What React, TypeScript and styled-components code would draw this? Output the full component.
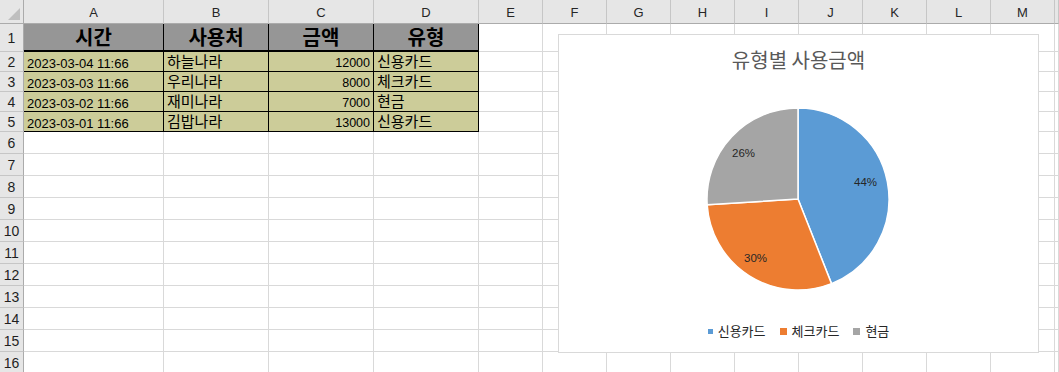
import React from 'react';
import styled, { createGlobalStyle } from 'styled-components';

const GlobalStyle = createGlobalStyle`
    html, body {
        margin: 0;
        padding: 0;
        background: #fff;
    }
    body {
        font-family: "Liberation Sans", "Noto Sans CJK KR", sans-serif;
    }
`;

const LATIN = '"Liberation Sans", "Noto Sans CJK KR", sans-serif';
const KOREAN = '"Noto Sans CJK KR", sans-serif';

// N is only a sliver at the right edge, its letter is out of view
const COLUMNS = ['A', 'B', 'C', 'D', 'E', 'F', 'G', 'H', 'I', 'J', 'K', 'L', 'M', ''];
const ROW_COUNT = 16;

const header = ['시간', '사용처', '금액', '유형'];
const records = [
    ['2023-03-04 11:66', '하늘나라', '12000', '신용카드'],
    ['2023-03-03 11:66', '우리나라', '8000', '체크카드'],
    ['2023-03-02 11:66', '재미나라', '7000', '현금'],
    ['2023-03-01 11:66', '김밥나라', '13000', '신용카드'],
];

const slices = [
    { name: '신용카드', value: 44, color: '#5B9BD5', label: { x: 159.5, y: 75 }, swatch: 5 },
    { name: '체크카드', value: 30, color: '#ED7D31', label: { x: 49.5, y: 151 }, swatch: 7 },
    { name: '현금', value: 26, color: '#A5A5A5', label: { x: 37.5, y: 46 }, swatch: 7 },
];

const Page = styled.div({
    position: 'relative',
    width: 1059,
    height: 372,
    overflow: 'hidden',
});

const Sheet = styled.div({
    display: 'grid',
    gridTemplateColumns: '24px 140px repeat(3, 105px) repeat(9, 64px) 4px',
    gridTemplateRows: '24px 28px repeat(4, 20px) repeat(11, 22px)',
});

const Corner = styled.div({
    position: 'relative',
    background: '#E6E6E6',
    borderRight: '1px solid #ABABAB',
    borderBottom: '1px solid #ABABAB',
    boxSizing: 'border-box',
    '&::after': {
        content: '""',
        position: 'absolute',
        right: 3,
        bottom: 3,
        width: 12,
        height: 12,
        background: '#BFBFBF',
        clipPath: 'polygon(100% 0, 100% 100%, 0 100%)',
    },
});

const ColHeader = styled.div({
    display: 'flex',
    alignItems: 'center',
    justifyContent: 'center',
    background: '#E6E6E6',
    borderRight: '1px solid #C6C6C6',
    borderBottom: '1px solid #ABABAB',
    boxSizing: 'border-box',
    fontFamily: LATIN,
    fontSize: 13,
    color: '#262626',
    paddingTop: 2,
});

const RowHeader = styled.div({
    display: 'flex',
    alignItems: 'center',
    justifyContent: 'center',
    background: '#E6E6E6',
    borderRight: '1px solid #ABABAB',
    borderBottom: '1px solid #C6C6C6',
    boxSizing: 'border-box',
    fontFamily: LATIN,
    fontSize: 14,
    color: '#1F1F1F',
    paddingTop: 1,
});

const Cell = styled.div({
    borderRight: '1px solid #D9D9D9',
    borderBottom: '1px solid #D9D9D9',
    boxSizing: 'border-box',
});

const HeadCell = styled.div({
    display: 'flex',
    alignItems: 'center',
    justifyContent: 'center',
    background: '#969696',
    borderRight: '1px solid #000',
    borderBottom: '2px solid #000',
    boxSizing: 'border-box',
    fontFamily: KOREAN,
    fontSize: 20,
    fontWeight: 700,
    lineHeight: '24px',
    color: '#000',
});

const DataCell = styled.div<{ $align?: 'left' | 'right'; $korean?: boolean }>(p => ({
    display: 'flex',
    alignItems: 'flex-end',
    justifyContent: p.$align === 'right' ? 'flex-end' : 'flex-start',
    background: '#CCCC99',
    borderRight: '1px solid #000',
    borderBottom: '1px solid #000',
    boxSizing: 'border-box',
    padding: p.$korean ? '0 3px 1px 3px' : '0 3px 0 3px',
    fontFamily: p.$korean ? KOREAN : LATIN,
    fontSize: p.$korean ? 15 : p.$align === 'right' ? 12.5 : 13,
    lineHeight: p.$korean ? '18px' : '15px',
    color: '#000',
    whiteSpace: 'nowrap',
}));

// chart floats over the cells like an excel chart object
const ChartFrame = styled.div({
    position: 'absolute',
    left: 558,
    top: 34,
    width: 481,
    height: 319,
    boxSizing: 'border-box',
    border: '1px solid #D9D9D9',
    background: '#fff',
    display: 'flex',
    flexDirection: 'column',
    alignItems: 'center',
});

const ChartTitle = styled.div({
    marginTop: 12,
    fontFamily: KOREAN,
    fontSize: 20,
    lineHeight: '26px',
    color: '#595959',
});

const Pie = styled.svg({
    display: 'block',
    marginTop: 34,
    marginLeft: -2,
});

const PieLabel = styled.text({
    fontFamily: LATIN,
    fontSize: 11.5,
    fill: '#262626',
});

const Legend = styled.div({
    display: 'flex',
    alignItems: 'center',
    gap: 14,
    marginTop: 31,
    fontFamily: KOREAN,
    fontSize: 13,
    lineHeight: '18px',
    color: '#262626',
});

const LegendItem = styled.div({
    display: 'flex',
    alignItems: 'center',
    gap: 5,
});

const Swatch = styled.span<{ $color: string; $size: number }>(p => ({
    display: 'block',
    width: p.$size,
    height: p.$size,
    background: p.$color,
}));

const point = (deg: number, r: number, c: number) => {
    const rad = (deg * Math.PI) / 180;
    return [c + r * Math.cos(rad), c + r * Math.sin(rad)];
};

const PieChart = () => {
    const c = 92;
    const r = 91;
    let angle = -90;
    return (
        <Pie width={184} height={184} viewBox="0 0 184 184">
            {slices.map(s => {
                const sweep = (s.value / 100) * 360;
                const [x1, y1] = point(angle, r, c);
                const [x2, y2] = point(angle + sweep, r, c);
                angle += sweep;
                return (
                    <path
                        key={s.name}
                        d={`M${c},${c} L${x1},${y1} A${r},${r} 0 ${sweep > 180 ? 1 : 0} 1 ${x2},${y2} Z`}
                        fill={s.color}
                        stroke="#fff"
                        strokeWidth={1.5}
                        strokeLinejoin="round"
                    />
                );
            })}
            {slices.map(s => (
                <PieLabel key={s.name} x={s.label.x} y={s.label.y} textAnchor="middle" dominantBaseline="central">
                    {s.value}%
                </PieLabel>
            ))}
        </Pie>
    );
};

export default function App() {
    const body: React.ReactNode[] = [];
    for (let row = 1; row <= ROW_COUNT; row++) {
        body.push(<RowHeader key={`r${row}`}>{row}</RowHeader>);
        COLUMNS.forEach((col, i) => {
            const key = `${i}-${row}`;
            if (row === 1 && i < 4) {
                body.push(<HeadCell key={key}>{header[i]}</HeadCell>);
            } else if (row >= 2 && row <= 5 && i < 4) {
                const value = records[row - 2][i];
                body.push(
                    <DataCell key={key} $align={i === 2 ? 'right' : 'left'} $korean={i === 1 || i === 3}>
                        {value}
                    </DataCell>
                );
            } else {
                body.push(<Cell key={key} />);
            }
        });
    }

    return (
        <Page>
            <GlobalStyle />
            <Sheet>
                <Corner />
                {COLUMNS.map((col, i) => (
                    <ColHeader key={i}>{col}</ColHeader>
                ))}
                {body}
            </Sheet>
            <ChartFrame>
                <ChartTitle>유형별 사용금액</ChartTitle>
                <PieChart />
                <Legend>
                    {slices.map(s => (
                        <LegendItem key={s.name}>
                            <Swatch $color={s.color} $size={s.swatch} />
                            {s.name}
                        </LegendItem>
                    ))}
                </Legend>
            </ChartFrame>
        </Page>
    );
}
